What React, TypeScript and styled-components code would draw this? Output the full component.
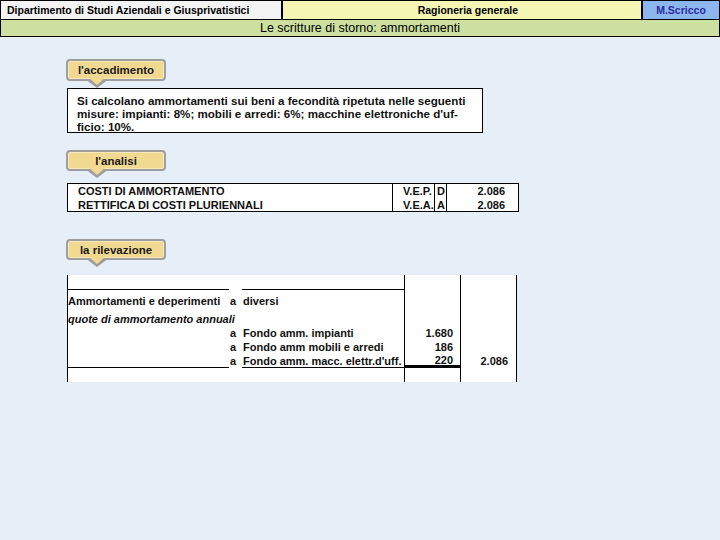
import React from "react";
import styled, { createGlobalStyle } from "styled-components";

const Global = createGlobalStyle`
  html, body { margin: 0; padding: 0; background: #e6eef8; }
  body { font-family: "Liberation Sans", Arial, sans-serif; color: #000; }
  * { box-sizing: border-box; }
`;

const Page = styled.div`
  width: 720px;
  height: 540px;
  background: #e6eef8;
  overflow: hidden;
  display: flex;
  flex-direction: column;
`;

const TopRow = styled.div`
  display: grid;
  grid-template-columns: 280px 358px 1fr;
  column-gap: 2px;
  background: #000;
  padding: 1px;
  height: 20px;
`;

const HeaderCell = styled.div<{ $bg: string; $color?: string; $align?: string; $pad?: number }>`
  background: ${(p) => p.$bg};
  color: ${(p) => p.$color || "#000"};
  display: flex;
  align-items: center;
  justify-content: ${(p) => p.$align || "center"};
  padding-left: ${(p) => p.$pad || 0}px;
  font-size: 10.5px;
  font-weight: bold;
  white-space: nowrap;
`;

const TitleBar = styled.div`
  height: 17px;
  background: #cde0a0;
  border-bottom: 1px solid #000;
  border-left: 1px solid #000;
  border-right: 1px solid #000;
  display: flex;
  align-items: center;
  justify-content: center;
  font-size: 12.5px;
  color: #000;
`;

const Content = styled.div`
  display: flex;
  flex-direction: column;
  align-items: flex-start;
  padding: 22px 0 0 66px;
`;

const Callout = styled.div<{ $mt?: number; $mb: number; $h?: number }>`
  position: relative;
  width: 100px;
  height: ${(p) => p.$h || 21}px;
  margin-top: ${(p) => p.$mt || 0}px;
  margin-bottom: ${(p) => p.$mb}px;
  border: 2px solid #9e9e9e;
  border-radius: 4px;
  background: #f2d992;
  box-shadow: inset 0 0 0 1px #f8e9bd;
  display: flex;
  align-items: center;
  justify-content: center;
  font-size: 11.5px;
  font-weight: bold;
  color: #1a1a1a;
  white-space: nowrap;

  &::before {
    content: "";
    position: absolute;
    left: 17px;
    top: 100%;
    border-left: 12px solid transparent;
    border-right: 12px solid transparent;
    border-top: 9px solid #9e9e9e;
  }
  &::after {
    content: "";
    position: absolute;
    left: 20px;
    top: 100%;
    margin-top: -2px;
    border-left: 9px solid transparent;
    border-right: 9px solid transparent;
    border-top: 8px solid #f2d992;
  }
`;

const TextBox = styled.div`
  margin-left: 1px;
  width: 416px;
  height: 45px;
  background: #fff;
  border: 1px solid #000;
  padding: 5px 0 0 9px;
  font-size: 11.6px;
  font-weight: bold;
  line-height: 13px;
  color: #111;
`;

const Line = styled.div`
  white-space: nowrap;
`;

const Analysis = styled.div`
  margin-left: 1px;
  width: 452px;
  display: grid;
  grid-template-columns: 324px 42px 12px 1fr;
  grid-template-rows: 14px 13px;
  background: #fff;
  border: 1px solid #000;
  font-size: 11px;
  font-weight: bold;
  color: #111;
`;

const ACell = styled.div<{ $align?: string; $pl?: number; $pr?: number; $line?: boolean }>`
  display: flex;
  align-items: center;
  justify-content: ${(p) => p.$align || "flex-start"};
  padding-left: ${(p) => p.$pl || 0}px;
  padding-right: ${(p) => p.$pr || 0}px;
  border-left: ${(p) => (p.$line ? "1px solid #000" : "none")};
  white-space: nowrap;
`;

const Journal = styled.div`
  margin-left: 1px;
  width: 450px;
  display: grid;
  grid-template-columns: 161px 13px 162px 56px 56px;
  grid-template-rows: 15px 22px 14px 14px 14px 14px 14px;
  background: #fff;
  border-left: 1px solid #000;
  border-right: 1px solid #000;
  font-size: 11px;
  font-weight: bold;
  color: #111;
`;

const JCell = styled.div<{
  $align?: string;
  $pl?: number;
  $pr?: number;
  $line?: boolean;
  $bottom?: number;
  $italic?: boolean;
}>`
  display: flex;
  align-items: center;
  justify-content: ${(p) => p.$align || "flex-start"};
  padding-left: ${(p) => p.$pl || 0}px;
  padding-right: ${(p) => p.$pr || 0}px;
  border-left: ${(p) => (p.$line ? "1px solid #000" : "none")};
  border-bottom: ${(p) => (p.$bottom ? `${p.$bottom}px solid #000` : "none")};
  font-style: ${(p) => (p.$italic ? "italic" : "normal")};
  white-space: nowrap;
`;

const rows: Array<[string, string, string, string, boolean]> = [
  ["a", "Fondo amm. impianti", "1.680", "", false],
  ["a", "Fondo amm mobili e arredi", "186", "", false],
  ["a", "Fondo amm. macc. elettr.d'uff.", "220", "2.086", true],
];

export default function App() {
  return (
    <Page>
      <Global />
      <TopRow>
        <HeaderCell $bg="#f3f3f3" $align="flex-start" $pad={6}>
          Dipartimento di Studi Aziendali e Giusprivatistici
        </HeaderCell>
        <HeaderCell $bg="#f5f5b4">&nbsp;&nbsp;&nbsp;&nbsp;Ragioneria generale</HeaderCell>
        <HeaderCell $bg="#8cb6ee" $color="#2c2ca0">
          M.Scricco
        </HeaderCell>
      </TopRow>
      <TitleBar>Le scritture di storno: ammortamenti</TitleBar>
      <Content>
        <Callout $h={22} $mb={7}>
          l'accadimento
        </Callout>
        <TextBox>
          <Line>Si calcolano ammortamenti sui beni a fecondità ripetuta nelle seguenti</Line>
          <Line>misure: impianti: 8%; mobili e arredi: 6%; macchine elettroniche d'uf-</Line>
          <Line>ficio: 10%.</Line>
        </TextBox>
        <Callout $mt={17} $mb={12}>
          l'analisi
        </Callout>
        <Analysis>
          <ACell $pl={10}>COSTI DI AMMORTAMENTO</ACell>
          <ACell $line $pl={10}>V.E.P.</ACell>
          <ACell $line $pl={2}>D</ACell>
          <ACell $line $align="flex-end" $pr={13}>2.086</ACell>
          <ACell $pl={10}>RETTIFICA DI COSTI PLURIENNALI</ACell>
          <ACell $line $pl={10}>V.E.A.</ACell>
          <ACell $line $pl={2}>A</ACell>
          <ACell $line $align="flex-end" $pr={13}>2.086</ACell>
        </Analysis>
        <Callout $mt={27} $mb={15}>
          la rilevazione
        </Callout>
        <Journal>
          <JCell $bottom={1} />
          <JCell />
          <JCell $bottom={1} />
          <JCell $line />
          <JCell $line />

          <JCell>Ammortamenti e deperimenti</JCell>
          <JCell $pl={1}>a</JCell>
          <JCell $pl={1}>diversi</JCell>
          <JCell $line />
          <JCell $line />

          <JCell $italic>quote di ammortamento annuali</JCell>
          <JCell />
          <JCell />
          <JCell $line />
          <JCell $line />

          {rows.map(([a, d, amt, tot, last], i) => (
            <React.Fragment key={i}>
              <JCell $bottom={last ? 1 : 0} />
              <JCell $pl={1}>{a}</JCell>
              <JCell $pl={1} $bottom={last ? 1 : 0}>
                {d}
              </JCell>
              <JCell $line $align="flex-end" $pr={7} $bottom={last ? 3 : 0}>
                {amt}
              </JCell>
              <JCell $line $align="flex-end" $pr={8}>
                {tot}
              </JCell>
            </React.Fragment>
          ))}

          <JCell />
          <JCell />
          <JCell />
          <JCell $line />
          <JCell $line />
        </Journal>
      </Content>
    </Page>
  );
}
